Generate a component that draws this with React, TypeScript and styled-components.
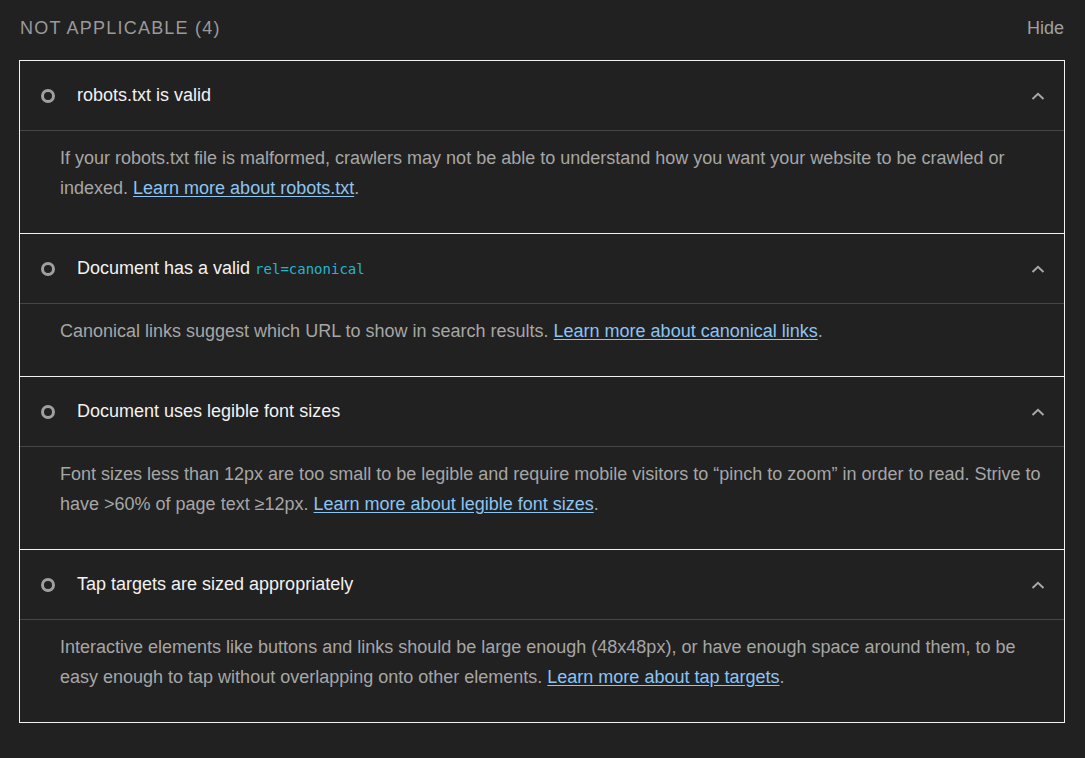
import React from "react";
import styled, { createGlobalStyle } from "styled-components";

const Global = createGlobalStyle`
  html, body { margin: 0; padding: 0; background: #212121; }
  body { font-family: "Liberation Sans", Arial, sans-serif; -webkit-font-smoothing: antialiased; }
`;

const Page = styled.div`
  padding: 0 20px 36px 19px;
  background: #212121;
`;

const GroupHeader = styled.div`
  height: 56px;
  margin-bottom: 4px;
  display: flex;
  align-items: center;
  justify-content: space-between;
  padding-left: 1px;
`;

const GroupTitle = styled.span`
  font-size: 18px;
  letter-spacing: 1.22px;
  text-transform: uppercase;
  color: #9a9a9a;
`;

const HideButton = styled.span`
  font-size: 18px;
  color: #a0a0a0;
  margin-right: 1px;
`;

const AuditList = styled.div`
  border: 1px solid #f2f2f2;
`;

const Audit = styled.section<{ $first?: boolean }>`
  border-top: ${(p) => (p.$first ? "none" : "1px solid #f2f2f2")};
`;

const Summary = styled.div`
  height: 69px;
  display: flex;
  align-items: center;
  padding: 0 19px 0 21px;
  border-bottom: 1px solid #464646;
`;

const StatusCircle = styled.span`
  width: 14px;
  height: 14px;
  box-sizing: border-box;
  border-radius: 50%;
  border: 3px solid #a0a0a0;
  flex-shrink: 0;
`;

const Title = styled.span`
  margin-left: 22px;
  flex: 1;
  font-size: 18px;
  color: #f2f2f2;
`;

const Code = styled.code`
  font-family: "DejaVu Sans Mono", "Liberation Mono", monospace;
  font-size: 14px;
  color: #22b5cf;
`;

const Chevron = styled.svg`
  width: 14px;
  height: 8px;
  flex-shrink: 0;
`;

const Description = styled.p`
  margin: 0;
  padding: 12px 16px 30px 40px;
  font-size: 18px;
  line-height: 30px;
  color: #a6a6a6;
`;

const Link = styled.a`
  color: #8cc4f2;
  text-decoration: underline;
  text-underline-offset: 2px;
`;

type Item = {
  title: React.ReactNode;
  text: string;
  link: string;
};

const items: Item[] = [
  {
    title: "robots.txt is valid",
    text: "If your robots.txt file is malformed, crawlers may not be able to understand how you want your website to be crawled or indexed. ",
    link: "Learn more about robots.txt",
  },
  {
    title: (
      <>
        Document has a valid <Code>rel=canonical</Code>
      </>
    ),
    text: "Canonical links suggest which URL to show in search results. ",
    link: "Learn more about canonical links",
  },
  {
    title: "Document uses legible font sizes",
    text: "Font sizes less than 12px are too small to be legible and require mobile visitors to \u201cpinch to zoom\u201d in order to read. Strive to have >60% of page text \u226512px. ",
    link: "Learn more about legible font sizes",
  },
  {
    title: "Tap targets are sized appropriately",
    text: "Interactive elements like buttons and links should be large enough (48x48px), or have enough space around them, to be easy enough to tap without overlapping onto other elements. ",
    link: "Learn more about tap targets",
  },
];

export default function App() {
  return (
    <Page>
      <Global />
      <GroupHeader>
        <GroupTitle>Not applicable (4)</GroupTitle>
        <HideButton>Hide</HideButton>
      </GroupHeader>
      <AuditList>
        {items.map((it, i) => (
          <Audit key={i} $first={i === 0}>
            <Summary>
              <StatusCircle />
              <Title>{it.title}</Title>
              <Chevron viewBox="0 0 14 8">
                <polyline
                  points="1.5,7 7,1.8 12.5,7"
                  fill="none"
                  stroke="#a8a8a8"
                  strokeWidth="2"
                />
              </Chevron>
            </Summary>
            <Description>
              {it.text}
              <Link href="#">{it.link}</Link>.
            </Description>
          </Audit>
        ))}
      </AuditList>
    </Page>
  );
}
